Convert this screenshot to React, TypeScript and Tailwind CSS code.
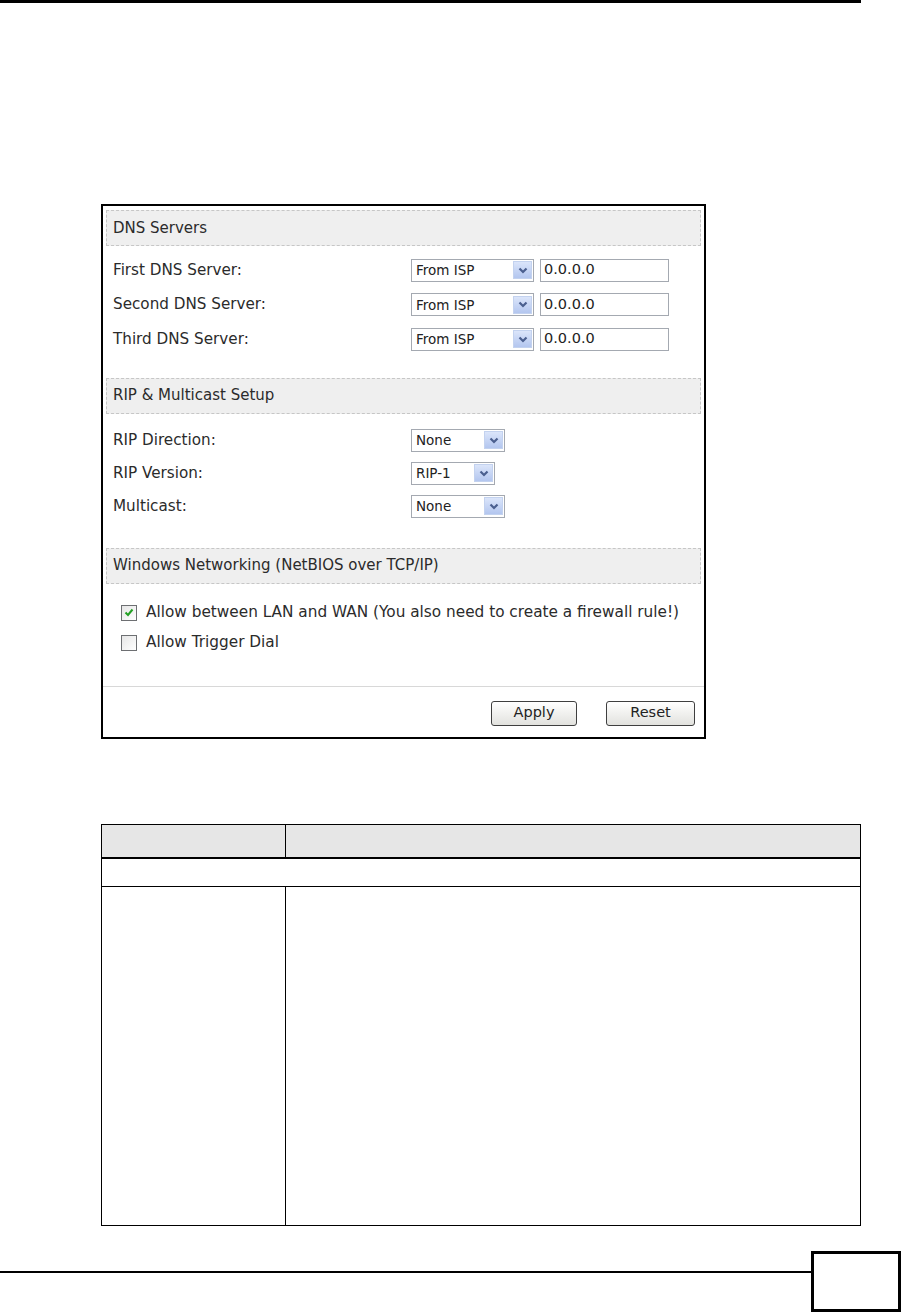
import React from "react";

const font = "font-['DejaVu_Sans',Verdana,sans-serif]";

function Chevron() {
  return (
    <span className="flex h-[18px] w-[19px] items-center justify-center border border-[#c3d2ef] bg-gradient-to-b from-[#dbe5fa] to-[#b3c6ef]">
      <svg width="10" height="7" viewBox="0 0 10 7">
        <path d="M1.5 1.5 L5 5 L8.5 1.5" fill="none" stroke="#4a5f8f" strokeWidth="2.2" />
      </svg>
    </span>
  );
}

function Select({ value, width }: { value: string; width: string }) {
  return (
    <div
      className={`flex h-[23px] ${width} items-center justify-between border border-[#a4a9b1] bg-white pl-[4px] pr-[1px] text-[13.5px] text-[#222]`}
    >
      <span>{value}</span>
      <Chevron />
    </div>
  );
}

function TextBox({ value }: { value: string }) {
  return (
    <div className="flex h-[23px] w-[129px] items-center border border-[#a4a9b1] bg-white pl-[3px] text-[14.5px] text-[#222]">
      {value}
    </div>
  );
}

function SectionHeader({ title }: { title: string }) {
  return (
    <div className="flex h-[36px] items-center border border-dashed border-[#c6c6c6] bg-[#efefef] pl-[6px] text-[15px] text-[#2b2b2b]">
      {title}
    </div>
  );
}

function Row({ label, children, h }: { label: string; children: React.ReactNode; h: string }) {
  return (
    <div className={`flex ${h} items-center pl-[7px] text-[15.2px] text-[#2b2b2b]`}>
      <span className="w-[298px]">{label}</span>
      <div className="flex items-center gap-[6px]">{children}</div>
    </div>
  );
}

function CheckBox({ checked }: { checked?: boolean }) {
  return (
    <span className="flex h-[16px] w-[16px] items-center justify-center border border-[#6d6f72] bg-gradient-to-br from-[#e6e6e6] to-white">
      {checked && (
        <svg width="10" height="9" viewBox="0 0 10 9">
          <path d="M1.5 4.5 L4 7 L8.5 1.5" fill="none" stroke="#23a024" strokeWidth="2" />
        </svg>
      )}
    </span>
  );
}

function Button({ label, width }: { label: string; width: string }) {
  return (
    <div
      className={`flex h-[25px] ${width} items-center justify-center rounded-[3px] border border-[#3f3f3f] bg-gradient-to-b from-white to-[#e2e2de] text-[14.5px] text-[#222]`}
    >
      {label}
    </div>
  );
}

export default function App() {
  return (
    <div className={`relative h-[1315px] w-[902px] overflow-hidden bg-white ${font}`}>
      <div className="h-[3px] w-[861px] bg-black" />

      {/* screenshot panel */}
      <div className="ml-[101px] mt-[201px] h-[535px] w-[605px] border-2 border-black px-[3px] pt-[4px]">
        <SectionHeader title="DNS Servers" />
        <div className="mt-[7px]">
          {["First DNS Server:", "Second DNS Server:", "Third DNS Server:"].map((l) => (
            <Row key={l} label={l} h="h-[34.5px]">
              <Select value="From ISP" width="w-[123px]" />
              <TextBox value="0.0.0.0" />
            </Row>
          ))}
        </div>

        <div className="mt-[21px]">
          <SectionHeader title="RIP & Multicast Setup" />
        </div>
        <div className="mt-[10px]">
          <Row label="RIP Direction:" h="h-[33px]">
            <Select value="None" width="w-[94px]" />
          </Row>
          <Row label="RIP Version:" h="h-[33px]">
            <Select value="RIP-1" width="w-[84px]" />
          </Row>
          <Row label="Multicast:" h="h-[33px]">
            <Select value="None" width="w-[94px]" />
          </Row>
        </div>

        <div className="mt-[25px]">
          <SectionHeader title="Windows Networking (NetBIOS over TCP/IP)" />
        </div>
        <div className="mt-[14px] pl-[15px] text-[15.3px] text-[#2b2b2b]">
          <div className="flex h-[30px] items-center gap-[9px]">
            <CheckBox checked />
            <span>Allow between LAN and WAN (You also need to create a firewall rule!)</span>
          </div>
          <div className="flex h-[30px] items-center gap-[9px]">
            <CheckBox />
            <span>Allow Trigger Dial</span>
          </div>
        </div>

        <div className="-mx-[3px] mt-[28px] h-px bg-[#d8d8d8]" />
        <div className="mt-[14px] flex justify-end gap-[29px] pr-[6px]">
          <Button label="Apply" width="w-[86px]" />
          <Button label="Reset" width="w-[89px]" />
        </div>
      </div>

      {/* description table */}
      <div className="ml-[101px] mt-[85px] w-[760px] border-[1.5px] border-black">
        <div className="flex h-[34px] border-b-[2.5px] border-black bg-[#e6e6e6]">
          <div className="w-[184px] border-r-[1.5px] border-black" />
          <div className="flex-1" />
        </div>
        <div className="h-[28px] border-b-[1.5px] border-black" />
        <div className="flex h-[338px]">
          <div className="w-[184px] border-r-[1.5px] border-black" />
          <div className="flex-1" />
        </div>
      </div>

      {/* footer */}
      <div className="mt-[25px] flex">
        <div className="mt-[20px] h-[2px] w-[811px] bg-black" />
        <div className="h-[61px] w-[90px] border-[3px] border-black" />
      </div>
    </div>
  );
}
